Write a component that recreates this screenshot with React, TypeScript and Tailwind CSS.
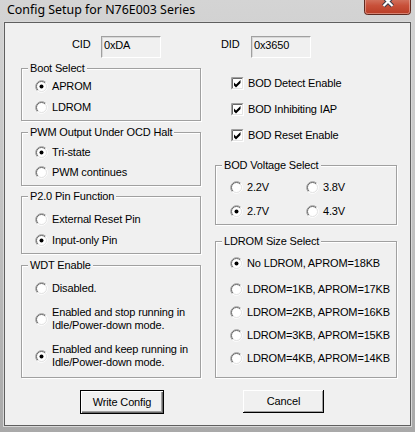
import React from "react";

const Radio = ({ checked }: { checked?: boolean }) => (
  <svg width="13" height="13" viewBox="0 0 13 13" className="shrink-0">
    <circle cx="6.5" cy="6.5" r="5" fill="#fff" />
    <path d="M2.26 10.74A6 6 0 0 1 10.74 2.26" fill="none" stroke="#a0a0a0" />
    <path d="M2.96 10.04A5 5 0 0 1 10.04 2.96" fill="none" stroke="#696969" />
    <path d="M10.74 2.26A6 6 0 0 1 2.26 10.74" fill="none" stroke="#ffffff" />
    <path d="M10.04 2.96A5 5 0 0 1 2.96 10.04" fill="none" stroke="#e3e3e3" />
    {checked && <circle cx="6.5" cy="6.5" r="2" fill="#000" />}
  </svg>
);

const CheckBox = () => (
  <svg width="13" height="13" viewBox="0 0 13 13" className="shrink-0">
    <rect x="0" y="0" width="13" height="13" fill="#fff" />
    <path d="M0.5 12.5V0.5H12.5" fill="none" stroke="#a0a0a0" />
    <path d="M1.5 11.5V1.5H11.5" fill="none" stroke="#696969" />
    <path d="M0.5 12.5H12.5V0.5" fill="none" stroke="#ffffff" />
    <path d="M1.5 11.5H11.5V1.5" fill="none" stroke="#e3e3e3" />
    <path d="M3 5.5L5 7.5L9.5 3V6L5 10.5L3 8.5Z" fill="#000" />
  </svg>
);

const CloseButton = () => (
  <svg width="47" height="15" viewBox="0 0 47 15" className="ml-auto mr-[4px] shrink-0">
    <defs>
      <linearGradient id="closeGrad" x1="0" y1="0" x2="0" y2="1">
        <stop offset="0" stopColor="#d98a78" />
        <stop offset="0.55" stopColor="#c85039" />
        <stop offset="1" stopColor="#b83c25" />
      </linearGradient>
    </defs>
    <rect x="0.5" y="-5" width="46" height="19.5" rx="3" fill="url(#closeGrad)" stroke="#5e2a20" />
    <rect x="1.5" y="-4" width="44" height="17.5" rx="2" fill="none" stroke="#e9b3a6" strokeOpacity="0.6" />
    <path d="M19.5 -3L28.5 6M28.5 -3L19.5 6" stroke="#3b3b4a" strokeWidth="4.2" />
    <path d="M19.5 -3L28.5 6M28.5 -3L19.5 6" stroke="#fff" strokeWidth="2.2" />
  </svg>
);

const Group = ({
  title,
  className,
  children,
}: {
  title: string;
  className: string;
  children: React.ReactNode;
}) => (
  <div
    className={`relative border border-[#a0a0a0] shadow-[inset_1px_1px_0_#fff,1px_1px_0_#fff] ${className}`}
  >
    <span className="absolute left-[6px] top-[-7px] bg-[#f0f0f0] px-[2px] leading-[13px] whitespace-nowrap">
      {title}
    </span>
    {children}
  </div>
);

const RadioRow = ({
  label,
  checked,
  className,
}: {
  label: React.ReactNode;
  checked?: boolean;
  className: string;
}) => (
  <div className={`flex items-center gap-[4px] ${className}`}>
    <Radio checked={checked} />
    <span className="leading-[13px] whitespace-nowrap">{label}</span>
  </div>
);

const CheckRow = ({ label }: { label: string }) => (
  <div className="flex h-[26px] items-center gap-[4px]">
    <CheckBox />
    <span className="leading-[13px]">{label}</span>
  </div>
);

const ReadBox = ({ value }: { value: string }) => (
  <div className="h-[22px] w-[60px] border border-t-[#a0a0a0] border-l-[#a0a0a0] border-b-white border-r-white bg-[#f0f0f0] pl-[2px] pt-[2px] leading-[13px] shadow-[inset_1px_1px_0_#d8d8d8]">
    {value}
  </div>
);

export default function App() {
  return (
    <div className="h-[432px] w-[415px] overflow-hidden bg-gradient-to-b from-[#d4d4d4] via-[#c2c2c2] to-[#a9a9a9] font-['Liberation_Sans',Arial,sans-serif] text-[11px] tracking-[-0.15px] text-black">
      <div className="flex h-[22px] items-start">
        <span className="ml-[7px] mt-[1px] font-['Noto_Sans',sans-serif] text-[12.4px] leading-[18px] tracking-normal text-black">
          Config Setup for N76E003 Series
        </span>
        <CloseButton />
      </div>

      <div className="ml-[4px] h-[404px] w-[407px] border border-[#5f5f5f] bg-[#f0f0f0] shadow-[0_0_0_1px_#d8d8d8]">
        <div className="mt-[13px] flex h-[22px]">
          <span className="ml-[67px] mt-[2px] w-[29px] leading-[13px]">CID</span>
          <ReadBox value="0xDA" />
          <span className="ml-[60px] mt-[2px] w-[30px] leading-[13px]">DID</span>
          <ReadBox value="0x3650" />
        </div>

        <div className="mt-[10px] flex gap-[14px] pl-[16px]">
          <div className="flex w-[180px] flex-col">
            <Group title="Boot Select" className="h-[53px] pt-[7px]">
              <RadioRow checked label="APROM" className="h-[21px] pl-[13px]" />
              <RadioRow label="LDROM" className="h-[21px] pl-[13px]" />
            </Group>
            <Group title="PWM Output Under OCD Halt" className="mt-[11px] h-[54px] pt-[9px]">
              <RadioRow checked label="Tri-state" className="h-[20px] pl-[13px]" />
              <RadioRow label="PWM continues" className="h-[20px] pl-[13px]" />
            </Group>
            <Group title="P2.0 Pin Function" className="mt-[10px] h-[58px] pt-[12px]">
              <RadioRow label="External Reset Pin" className="h-[21px] pl-[13px]" />
              <RadioRow checked label="Input-only Pin" className="h-[21px] pl-[13px]" />
            </Group>
            <Group title="WDT Enable" className="mt-[11px] h-[113px] pt-[12px]">
              <RadioRow label="Disabled." className="h-[20px] pl-[13px]" />
              <RadioRow
                label={
                  <>
                    Enabled and stop running in
                    <br />
                    Idle/Power-down mode.
                  </>
                }
                className="mt-[8px] h-[26px] pl-[13px]"
              />
              <RadioRow
                checked
                label={
                  <>
                    Enabled and keep running in
                    <br />
                    Idle/Power-down mode.
                  </>
                }
                className="mt-[11px] h-[26px] pl-[13px]"
              />
            </Group>
            <button className="ml-[59px] mt-[12px] h-[24px] w-[84px] border border-black bg-[#f0f0f0] text-center leading-[13px] shadow-[inset_1px_1px_0_#fff,inset_-1px_-1px_0_#696969,inset_-2px_-2px_0_#a0a0a0]">
              Write Config
            </button>
          </div>

          <div className="flex w-[182px] flex-col">
            <div className="pl-[16px] pt-[2px]">
              <CheckRow label="BOD Detect Enable" />
              <CheckRow label="BOD Inhibiting IAP" />
              <CheckRow label="BOD Reset Enable" />
            </div>
            <Group title="BOD Voltage Select" className="mt-[17px] h-[60px] pt-[9px]">
              <div className="grid grid-cols-[76px_1fr] pl-[14px]">
                <RadioRow label="2.2V" className="h-[24px]" />
                <RadioRow label="3.8V" className="h-[24px]" />
                <RadioRow checked label="2.7V" className="h-[24px]" />
                <RadioRow label="4.3V" className="h-[24px]" />
              </div>
            </Group>
            <Group title="LDROM Size Select" className="mt-[16px] h-[137px] pt-[10px]">
              <div className="flex flex-col pl-[14px]">
                <RadioRow checked label="No LDROM, APROM=18KB" className="h-[22px]" />
                <RadioRow label="LDROM=1KB, APROM=17KB" className="mt-[4px] h-[23px]" />
                <RadioRow label="LDROM=2KB, APROM=16KB" className="h-[23px]" />
                <RadioRow label="LDROM=3KB, APROM=15KB" className="h-[23px]" />
                <RadioRow label="LDROM=4KB, APROM=14KB" className="h-[23px]" />
              </div>
            </Group>
            <button className="ml-[28px] mt-[12px] h-[23px] w-[81px] bg-[#f0f0f0] text-center leading-[13px] shadow-[inset_-1px_-1px_0_#000,inset_1px_1px_0_#fff,inset_-2px_-2px_0_#a0a0a0]">
              Cancel
            </button>
          </div>
        </div>
      </div>
    </div>
  );
}
